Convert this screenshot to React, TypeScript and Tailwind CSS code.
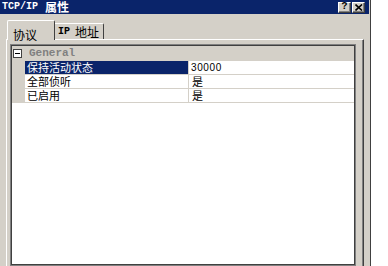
import React from "react";

const cjk = { fontFamily: '"Noto Sans CJK SC", "Liberation Sans", sans-serif' };
const mono = { fontFamily: '"Liberation Mono", "Noto Sans CJK SC", monospace' };
const sans = { fontFamily: '"Liberation Sans", "Noto Sans CJK SC", sans-serif' };

function CaptionButton({ children }: { children: React.ReactNode }) {
    return (
        <div className="w-[13px] h-[11px] bg-[#d4d0c8] border-t border-l border-white border-r border-b border-r-[#404040] border-b-[#404040] shadow-[inset_-1px_-1px_0_#808080] flex items-center justify-center">
            {children}
        </div>
    );
}

function Row({ name, value, selected, latin }: { name: string; value: string; selected?: boolean; latin?: boolean }) {
    return (
        <div className="flex h-[14px] border-b border-[#d4d0c8]">
            <div className="w-[13px] bg-[#d4d0c8]" />
            <div
                className={
                    selected
                        ? "w-[164px] bg-[#0a246a] text-white text-[11px] leading-[13px] pl-[2px] border-r border-[#d4d0c8]"
                        : "w-[164px] bg-white text-black text-[11px] leading-[13px] pl-[2px] border-r border-[#d4d0c8]"
                }
                style={cjk}
            >
                {name}
            </div>
            <div
                className={
                    latin
                        ? "flex-1 text-[10px] leading-[13px] pl-[2px] text-black tracking-[0.6px]"
                        : "flex-1 text-[11px] leading-[13px] pl-[3px] text-black"
                }
                style={latin ? sans : cjk}
            >
                {value}
            </div>
        </div>
    );
}

export default function App() {
    return (
        <div className="w-[388px] h-[266px] bg-white overflow-hidden">
            <div className="w-[371px] h-full bg-[#d4d0c8] border-r border-[#404040] flex flex-col">
                {/* title bar */}
                <div className="h-[14px] w-[369px] bg-[#0a246a] flex items-center justify-between pl-[2px] pr-[4px]">
                    <div className="text-white font-bold flex items-center h-[14px]">
                        <span className="text-[10px] leading-[14px]" style={mono}>
                            TCP/IP
                        </span>
                        <span className="ml-[7px] text-[12px] leading-[14px]" style={cjk}>
                            属性
                        </span>
                    </div>
                    <div className="flex gap-px">
                        <CaptionButton>
                            <span className="text-[10px] font-bold leading-none text-black" style={mono}>
                                ?
                            </span>
                        </CaptionButton>
                        <CaptionButton>
                            <svg width="8" height="7" viewBox="0 0 8 7">
                                <path d="M0.5 0.5 L7 6.5 M7 0.5 L0.5 6.5" stroke="black" strokeWidth="1.6" />
                            </svg>
                        </CaptionButton>
                    </div>
                </div>

                {/* tabs */}
                <div className="flex items-end pl-[7px] pt-[6px] relative z-10">
                    <div className="h-[20px] w-[48px] -mb-px bg-[#d4d0c8] border-t border-l border-white border-r border-r-[#404040] rounded-t-[2px] pl-[5px] pt-[1px]">
                        <span className="text-[12px] leading-[16px] text-black" style={cjk}>
                            协议
                        </span>
                    </div>
                    <div className="h-[16px] w-[49px] bg-[#d4d0c8] border-t border-white border-r border-r-[#404040] rounded-tr-[2px] pl-[3px] flex items-center">
                        <span className="text-[10px] font-bold text-black leading-[14px]" style={mono}>
                            IP
                        </span>
                        <span className="text-[12px] ml-[5px] text-black leading-[14px]" style={cjk}>
                            地址
                        </span>
                    </div>
                </div>

                {/* tab panel */}
                <div className="flex-1 ml-[6px] w-[358px] border-t border-l border-white border-r border-r-[#404040] shadow-[inset_-1px_0_0_#808080] pt-[4px] pl-[3px] flex flex-col">
                    <div className="w-[346px] flex-1 border border-[#808080]">
                        <div className="h-full border border-[#404040] bg-white">
                            {/* category */}
                            <div className="h-[15px] bg-[#d4d0c8] flex items-center">
                                <div className="ml-[1px] w-[9px] h-[9px] border border-[#404040] bg-white flex items-center justify-center">
                                    <div className="w-[5px] h-px bg-black" />
                                </div>
                                <span className="ml-[7px] text-[11px] font-bold text-[#808080] leading-[13px]" style={mono}>
                                    General
                                </span>
                            </div>
                            <Row name="保持活动状态" value="30000" selected latin />
                            <Row name="全部侦听" value="是" />
                            <Row name="已启用" value="是" />
                        </div>
                    </div>
                </div>
            </div>
        </div>
    );
}
